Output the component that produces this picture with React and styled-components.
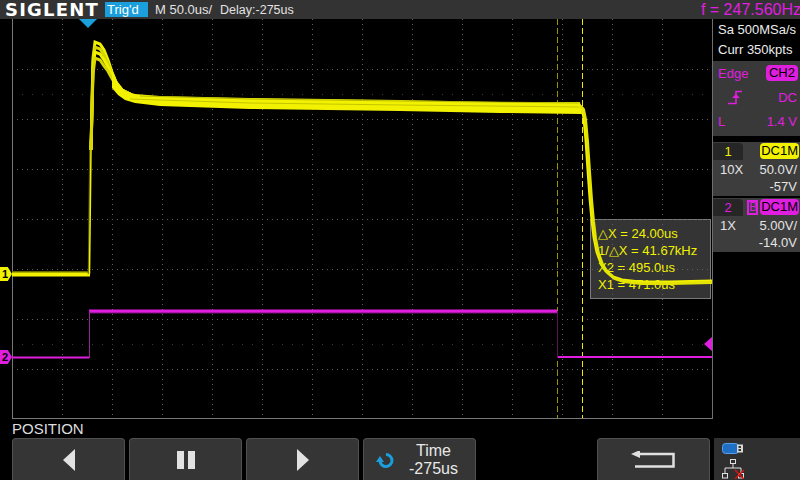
import React from 'react'
import styled, { createGlobalStyle } from 'styled-components'

const YEL = '#f2f200'
const MAG = '#e01ee0'
const BLUE = '#1a9fdc'

const Global = createGlobalStyle`
  html, body { margin: 0; padding: 0; background: #000; }
  body { font-family: "Liberation Sans", Arial, sans-serif; }
`

const Screen = styled.div`
  width: 800px;
  height: 480px;
  background: #000;
  display: flex;
  flex-direction: column;
  overflow: hidden;
  color: #e6e6e6;
  font-size: 13px;
`

const TopBar = styled.div`
  height: 19px;
  background: #333;
  display: flex;
  align-items: center;
  padding-left: 5px;
  white-space: nowrap;
`
const Logo = styled.div`
  font-family: "DejaVu Sans", sans-serif;
  font-weight: 700;
  font-size: 18px;
  letter-spacing: 1.2px;
  line-height: 19px;
  color: #fff;
  width: 100px;
`
const TrigBadge = styled.div`
  background: ${BLUE};
  color: #fff;
  width: 43px;
  height: 15px;
  line-height: 15px;
  padding-left: 2px;
  box-sizing: border-box;
`
const TopText = styled.span`
  color: #e2e2e2;
  font-size: ${p => p.size || 13}px;
  margin-left: ${p => p.gap}px;
`
const Freq = styled.span`
  margin-left: auto;
  margin-right: -1px;
  color: ${MAG};
  font-size: 16px;
`

const Main = styled.div`
  display: flex;
  height: 400px;
`
const PlotWrap = styled.div`
  position: relative;
  width: 712px;
  height: 400px;
  svg {
    position: relative;
    z-index: 1;
    display: block;
  }
`
const ChanMarker = styled.div`
  position: absolute;
  left: 0;
  top: ${p => p.top}px;
  width: 12px;
  height: 14px;
  background: ${p => p.color};
  clip-path: polygon(0 0, 65% 0, 100% 50%, 65% 100%, 0 100%);
  color: #000;
  font-size: 11px;
  font-weight: 700;
  line-height: 14px;
  padding-left: 2px;
  box-sizing: border-box;
  z-index: 2;
`
const TrigPos = styled.div`
  position: absolute;
  left: 79px;
  top: 0;
  width: 18px;
  height: 9px;
  background: ${BLUE};
  clip-path: polygon(0 0, 100% 0, 50% 100%);
  z-index: 2;
`
const TrigLevel = styled.div`
  position: absolute;
  left: 704px;
  top: 318px;
  width: 8px;
  height: 14px;
  background: ${MAG};
  clip-path: polygon(100% 0, 0 50%, 100% 100%);
  z-index: 2;
`
const CursorBox = styled.div`
  position: absolute;
  left: 590px;
  top: 200px;
  width: 121px;
  height: 80px;
  box-sizing: border-box;
  background: rgba(56, 56, 56, 0.92);
  border: 1px solid #7a7a7a;
  padding: 5px 0 0 7px;
  color: ${YEL};
  font-size: 13px;
  line-height: 17px;
  z-index: 0;
`

const SidePanel = styled.div`
  width: 87px;
  border-left: 1px solid #6e6e6e;
  display: flex;
  flex-direction: column;
`
const Info = styled.div`
  height: 41px;
  padding: 1px 0 0 5px;
  line-height: 20px;
  color: #ececec;
`
const TrigBlock = styled.div`
  height: 75px;
  background: #393939;
  padding: 3px 2px 0 5px;
  box-sizing: border-box;
  margin-bottom: 6px;
  color: ${MAG};
  display: flex;
  flex-direction: column;
`
const Row = styled.div`
  display: flex;
  justify-content: space-between;
  align-items: center;
  height: ${p => p.h || 17}px;
  padding: ${p => p.pad || '0'};
`
const Badge = styled.span`
  background: ${p => p.color};
  color: #000;
  border-radius: 4px;
  padding: 0 1px;
  height: 16px;
  line-height: 16px;
  min-width: 32px;
  text-align: center;
  box-sizing: border-box;
`
const ChBlock = styled.div`
  height: 54px;
  background: #3d3d3d;
  margin-bottom: 2px;
  color: #e4e4e4;
  display: flex;
  flex-direction: column;
`
const ChHead = styled.div`
  display: flex;
  align-items: center;
  height: 18px;
  padding-right: 1px;
`
const ChTab = styled.span`
  width: 30px;
  height: 17px;
  line-height: 17px;
  background: #262626;
  border-radius: 0 4px 0 0;
  text-align: center;
  color: ${p => p.color};
  margin-right: auto;
`
const BwBox = styled.span`
  border: 2px solid ${MAG};
  color: ${MAG};
  font-size: 12px;
  line-height: 11px;
  height: 15px;
  width: 11px;
  text-align: center;
  margin-right: 2px;
  box-sizing: border-box;
`
const ChRow = styled(Row)`
  padding: 0 3px 0 7px;
`

const Bottom = styled.div`
  height: 61px;
  display: flex;
  flex-direction: column;
`
const SoftLabel = styled.div`
  height: 19px;
  line-height: 20px;
  padding-left: 12px;
  color: #dedede;
  font-size: 15px;
`
const ButtonRow = styled.div`
  flex: 1;
  display: flex;
  padding-left: 12px;
  gap: 4px;
`
const SoftKey = styled.div`
  width: 113px;
  box-sizing: border-box;
  background: #353535;
  border: 1px solid #505050;
  border-bottom: none;
  border-radius: 4px 4px 0 0;
  display: flex;
  align-items: center;
  justify-content: center;
  color: #e8e8e8;
`
const Spacer = styled.div`
  flex: 1;
`
const TimeText = styled.div`
  font-size: 16px;
  line-height: 18px;
  text-align: center;
  margin-left: 10px;
  width: 60px;
`
const IconBox = styled.div`
  width: 86px;
  background: #2f2f2f;
  display: flex;
  flex-direction: column;
  padding: 5px 0 0 8px;
  box-sizing: border-box;
  gap: 5px;
`

const vLines = Array.from({ length: 13 }, (_, i) => 62 + i * 50)
const hLines = Array.from({ length: 7 }, (_, i) => 69 + i * 50)

const bandTop = '112,70 118,83 125,91 135,94 160,96 250,98 400,100 500,102 580,102'
const bandBot = '582,114 500,113 400,111 250,109 160,106 135,103 125,100 118,95 112,88'

const peakTraces = [0, 5, 10, 16].map(d =>
  `M91,150 L93,${58 + d} L95,${42 + d} L100,${44 + d} L104,${50 + d} L108,${60 + d * 0.7} L112,${72 + d * 0.4} L116,${82 + d * 0.2} L122,90 L130,94`
)

const fall = 'M578,104 L582,108 L584,118 L586,140 L588,170 L590,198 L592,220 L594,237 L597,252 L601,263 L606,271 L613,277 L622,280 L640,282 L670,282 L712,281'

function Plot() {
  return (
    <svg width="712" height="400" viewBox="0 19 712 400">
      {vLines.map(x => (
        <line key={'v' + x} x1={x + 0.5} y1="19" x2={x + 0.5} y2="418" stroke="#606060" strokeDasharray="1 4" />
      ))}
      {hLines.map(y => (
        <line key={'h' + y} x1="12" y1={y + 0.5} x2="712" y2={y + 0.5} stroke="#606060" strokeDasharray="1 4" />
      ))}
      <line x1="12" y1="94.5" x2="712" y2="94.5" stroke="#3a3a3a" strokeDasharray="1 9" />
      <line x1="12" y1="344.5" x2="712" y2="344.5" stroke="#3a3a3a" strokeDasharray="1 9" />
      <line x1="12.5" y1="19" x2="12.5" y2="419" stroke="#787878" />
      <line x1="12" y1="418.5" x2="712" y2="418.5" stroke="#787878" />

      {/* cursors */}
      <line x1="557.5" y1="19" x2="557.5" y2="418" stroke="#9a9000" strokeDasharray="6 3" />
      <line x1="582.5" y1="19" x2="582.5" y2="418" stroke="#f4e400" strokeDasharray="6 3" />

      {/* CH2 */}
      <rect x="12" y="356.5" width="77" height="2" fill={MAG} />
      <rect x="89" y="312" width="468" height="1.5" fill="#7a107a" />
      <rect x="89" y="309.5" width="468" height="3" fill={MAG} />
      <rect x="557" y="356" width="155" height="2" fill={MAG} />
      <line x1="89.5" y1="311" x2="89.5" y2="358" stroke="#9c209c" />
      <line x1="557.5" y1="311" x2="557.5" y2="358" stroke="#5a105a" />

      {/* CH1 */}
      <rect x="12" y="271" width="78" height="2" fill="#6e6e00" />
      <rect x="12" y="272.5" width="78" height="4" fill={YEL} />
      <line x1="88.5" y1="274" x2="90" y2="140" stroke="#5e5e00" strokeWidth="1.5" />
      <path d="M89.5,274 L91,150 L93,60" stroke={YEL} strokeWidth="1.5" fill="none" />
      {peakTraces.map((d, i) => (
        <path key={i} d={d} stroke={i % 2 ? '#d8d800' : YEL} strokeWidth="3" fill="none" />
      ))}
      <polygon points={`${bandTop} ${bandBot}`} fill={YEL} />
      <polyline points="130,99 250,103 400,105 580,107" stroke="#c4c400" strokeWidth="1" fill="none" />
      <polyline points="140,96 250,99 400,101 580,103" stroke="#a8a800" strokeWidth="0.8" fill="none" />
      <path d={fall} stroke={YEL} strokeWidth="3" fill="none" />
      <path d={fall} stroke="#e4e400" strokeWidth="3" fill="none" transform="translate(1.5,1.5)" />
    </svg>
  )
}

function EdgeIcon() {
  return (
    <svg width="14" height="15" viewBox="0 0 14 15">
      <path d="M0 13.5 H8 V1.5 H14" stroke={MAG} strokeWidth="1.5" fill="none" />
      <polygon points="4,8 12,8 8,4" fill={MAG} />
    </svg>
  )
}

function Tri({ dir }) {
  return (
    <svg width="12" height="22" viewBox="0 0 12 22">
      {dir === 'left'
        ? <polygon points="12,0 12,22 0,11" fill="#e2e2e2" />
        : <polygon points="0,0 0,22 12,11" fill="#e2e2e2" />}
    </svg>
  )
}

function PauseIcon() {
  return (
    <svg width="18" height="18" viewBox="0 0 18 18">
      <rect x="0" y="0" width="7" height="18" fill="#e2e2e2" />
      <rect x="11" y="0" width="7" height="18" fill="#e2e2e2" />
    </svg>
  )
}

function RotateIcon() {
  return (
    <svg width="18" height="18" viewBox="0 0 18 18">
      <path d="M10 3.5 A6 6 0 1 1 4 10" stroke={BLUE} strokeWidth="3" fill="none" />
      <polygon points="0,11 8,11 4,5" fill={BLUE} />
    </svg>
  )
}

function ReturnIcon() {
  return (
    <svg width="46" height="18" viewBox="0 0 46 18">
      <polygon points="0,3 9,-1 9,7" fill="#e0e0e0" />
      <path d="M8 3 H42.5 V15.5 H4" stroke="#e0e0e0" strokeWidth="2.5" fill="none" />
    </svg>
  )
}

function UsbIcon() {
  return (
    <svg width="22" height="11" viewBox="0 0 22 11">
      <rect x="0.5" y="0.5" width="16" height="10" rx="3" fill="#1f6fc4" stroke="#5aa0e8" />
      <rect x="15" y="1.5" width="6" height="8" fill="#d8d8d8" />
      <rect x="16.5" y="3" width="2.5" height="2" fill="#333" />
      <rect x="16.5" y="6" width="2.5" height="2" fill="#333" />
    </svg>
  )
}

function NetIcon() {
  return (
    <svg width="22" height="20" viewBox="0 0 22 20">
      <rect x="8.5" y="0.5" width="5" height="4" fill="none" stroke="#e0e0e0" />
      <path d="M11 4.5 V9 M3 9 H19 M3 9 V14 M19 9 V14" stroke="#e0e0e0" fill="none" />
      <rect x="0.5" y="14.5" width="5" height="4.5" fill="none" stroke="#e0e0e0" />
      <rect x="16.5" y="14.5" width="5" height="4.5" fill="none" stroke="#e0e0e0" />
      <path d="M13 11 L22 20 M22 11 L13 20" stroke="#e01010" strokeWidth="1.5" />
    </svg>
  )
}

export default function App() {
  return (
    <Screen>
      <Global />
      <TopBar>
        <Logo>SIGLENT</Logo>
        <TrigBadge>Trig'd</TrigBadge>
        <TopText gap={7}>M 50.0us/</TopText>
        <TopText gap={8} size={12.5}>Delay:-275us</TopText>
        <Freq>f = 247.560Hz</Freq>
      </TopBar>

      <Main>
        <PlotWrap>
          <CursorBox>
            <div>△X = 24.00us</div>
            <div>1/△X = 41.67kHz</div>
            <div>X2 = 495.0us</div>
            <div>X1 = 471.0us</div>
          </CursorBox>
          <Plot />
          <TrigPos />
          <TrigLevel />
          <ChanMarker top={248} color={YEL}>1</ChanMarker>
          <ChanMarker top={331} color={MAG}>2</ChanMarker>
        </PlotWrap>

        <SidePanel>
          <Info>
            <div>Sa 500MSa/s</div>
            <div>Curr 350kpts</div>
          </Info>
          <TrigBlock>
            <Row h={18}>
              <span>Edge</span>
              <Badge color={MAG}>CH2</Badge>
            </Row>
            <Row h={30} pad="0 1px 0 10px">
              <EdgeIcon />
              <span>DC</span>
            </Row>
            <Row h={18} pad="0 1px 0 0">
              <span>L</span>
              <span>1.4 V</span>
            </Row>
          </TrigBlock>
          <ChBlock>
            <ChHead>
              <ChTab color={YEL}>1</ChTab>
              <Badge color={YEL}>DC1M</Badge>
            </ChHead>
            <ChRow h={18}>
              <span>10X</span>
              <span>50.0V/</span>
            </ChRow>
            <ChRow h={17}>
              <span />
              <span>-57V</span>
            </ChRow>
          </ChBlock>
          <ChBlock>
            <ChHead>
              <ChTab color={MAG}>2</ChTab>
              <BwBox>B</BwBox>
              <Badge color={MAG}>DC1M</Badge>
            </ChHead>
            <ChRow h={18}>
              <span>1X</span>
              <span>5.00V/</span>
            </ChRow>
            <ChRow h={17}>
              <span />
              <span>-14.0V</span>
            </ChRow>
          </ChBlock>
        </SidePanel>
      </Main>

      <Bottom>
        <SoftLabel>POSITION</SoftLabel>
        <ButtonRow>
          <SoftKey><Tri dir="left" /></SoftKey>
          <SoftKey><PauseIcon /></SoftKey>
          <SoftKey><Tri dir="right" /></SoftKey>
          <SoftKey>
            <RotateIcon />
            <TimeText>
              <div>Time</div>
              <div>-275us</div>
            </TimeText>
          </SoftKey>
          <Spacer />
          <SoftKey><ReturnIcon /></SoftKey>
          <IconBox>
            <UsbIcon />
            <NetIcon />
          </IconBox>
        </ButtonRow>
      </Bottom>
    </Screen>
  )
}
